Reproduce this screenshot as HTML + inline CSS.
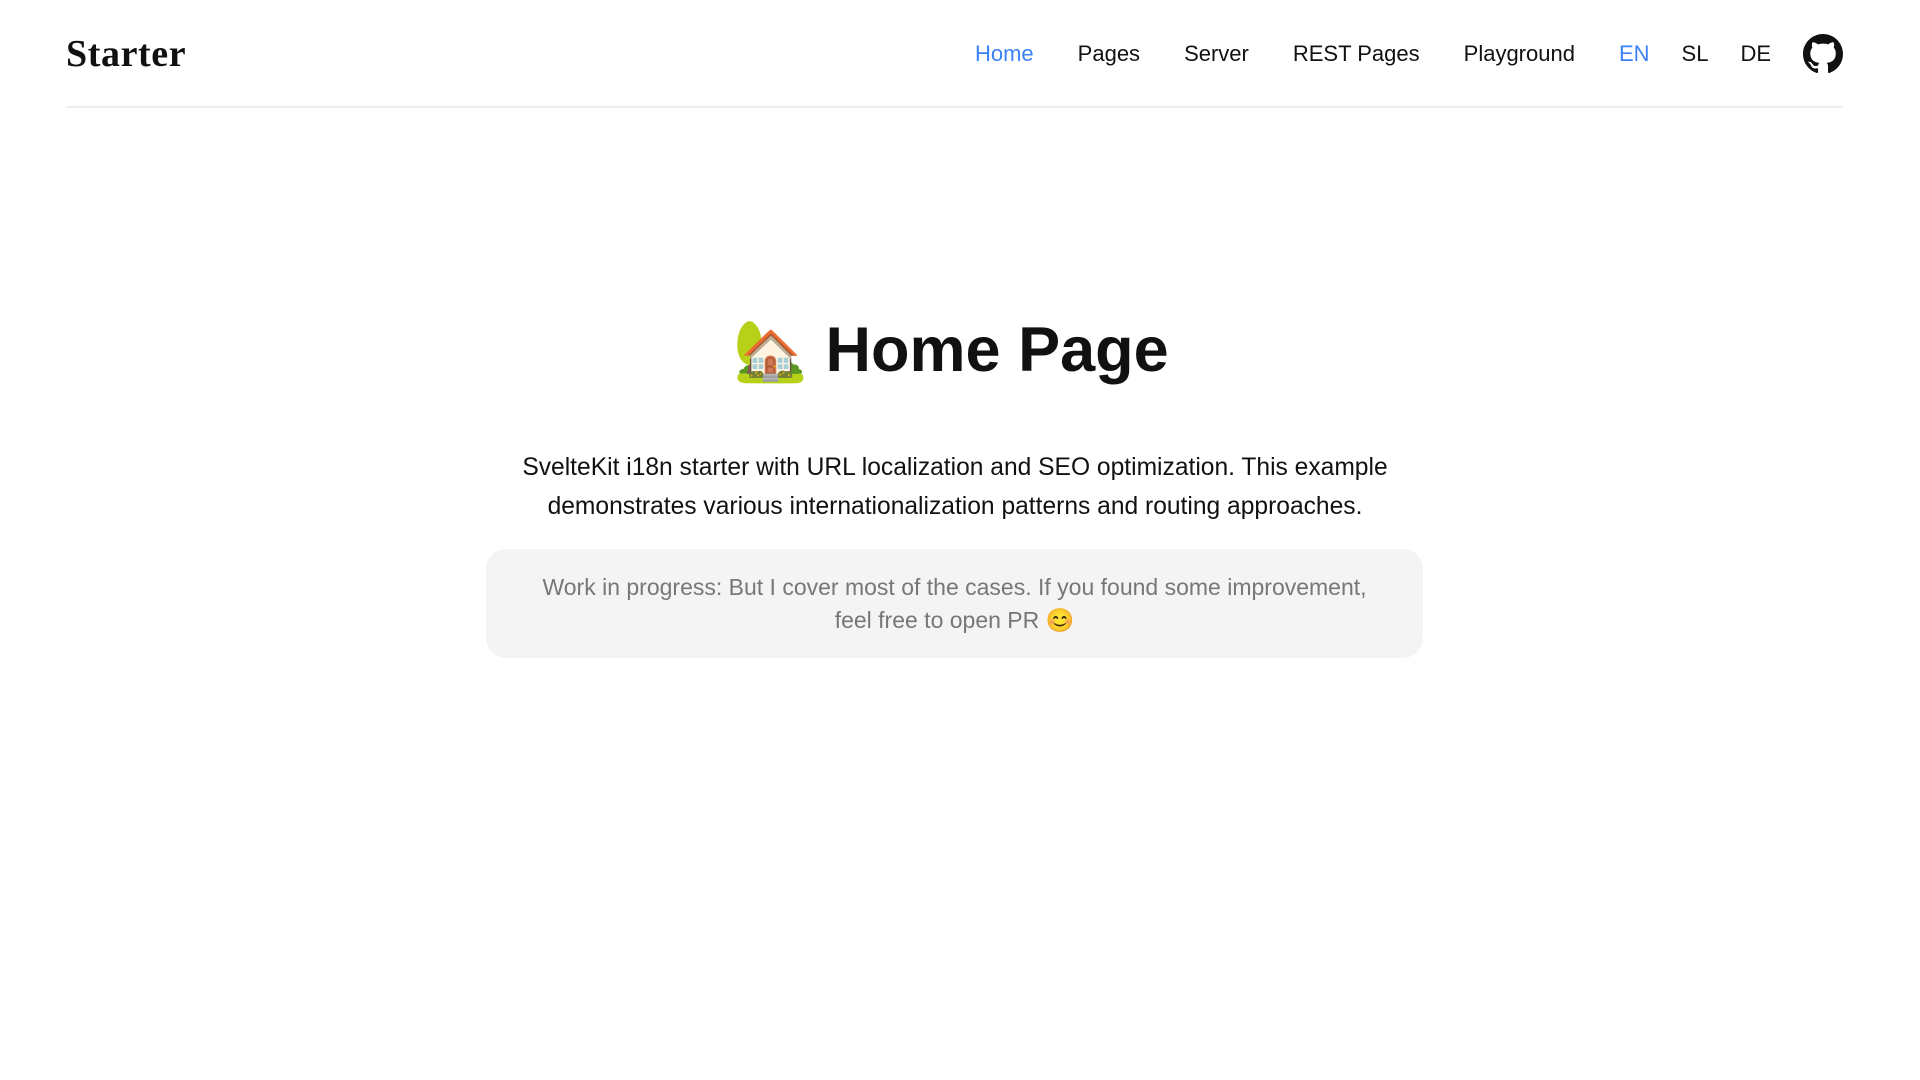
<!DOCTYPE html>
<html><head><meta charset="utf-8"><style>
body{margin:0;background:#fff;font-family:"Liberation Sans",sans-serif;color:#111;width:1920px;height:1080px;overflow:hidden}
header{position:absolute;left:66px;right:77px;top:0;height:106px;border-bottom:2px solid #eee}
.logo{position:absolute;left:0;top:32px;font-family:"Liberation Serif",serif;font-weight:bold;font-size:38px;letter-spacing:0.6px}
nav{position:absolute;right:0;top:34px;display:flex;align-items:center;font-size:22px}
nav a{margin-left:44px;color:#111;text-decoration:none}
nav a.act{color:#3b82f6}
nav .l{margin-left:32px}
nav svg{margin-left:32px}
h1{position:absolute;left:0;width:1920px;top:310px;margin:0;text-align:center;font-size:63px;font-weight:bold;line-height:80px;padding-right:18px;box-sizing:border-box}
p.d{position:absolute;left:0;width:1910px;top:448px;margin:0;text-align:center;font-size:24.6px;line-height:39px}
.box{position:absolute;left:486px;width:937px;top:549px;height:109px;background:#f4f4f4;border-radius:20px;text-align:center;color:#777;font-size:23px;line-height:33px;box-sizing:border-box;padding-top:22px}
</style></head><body>
<header><div class="logo">Starter</div>
<nav><a class="act">Home</a><a>Pages</a><a>Server</a><a>REST Pages</a><a>Playground</a><a class="act" style="margin-left:44px">EN</a><a class="l">SL</a><a class="l">DE</a>
<svg width="40" height="40" viewBox="0 0 16 16"><path fill="#111" d="M8 0C3.58 0 0 3.58 0 8c0 3.540 2.290 6.530 5.470 7.590.4.07.55-.17.55-.38 0-.19-.01-.82-.01-1.490-2.010.37-2.530-.49-2.690-.94-.09-.23-.48-.94-.82-1.130-.28-.15-.68-.52-.01-.53.63-.01 1.080.58 1.230.82.72 1.210 1.870.87 2.330.66.07-.52.28-.87.51-1.070-1.780-.2-3.640-.89-3.640-3.950 0-.87.31-1.590.82-2.150-.08-.2-.36-1.020.08-2.120 0 0 .67-.21 2.200.82.64-.18 1.320-.27 2-.27.68 0 1.360.09 2 .27 1.530-1.040 2.200-.82 2.200-.82.44 1.100.16 1.920.08 2.120.51.56.82 1.270.82 2.150 0 3.070-1.870 3.750-3.650 3.950.29.25.54.73.54 1.480 0 1.070-.01 1.930-.01 2.200 0 .21.15.46.55.38A8.013 8.013 0 0016 8c0-4.420-3.580-8-8-8z"/></svg></nav></header>
<h1><span style="font-size:60px">🏡</span> Home Page</h1>
<p class="d">SvelteKit i18n starter with URL localization and SEO optimization. This example<br>demonstrates various internationalization patterns and routing approaches.</p>
<div class="box">Work in progress: But I cover most of the cases. If you found some improvement,<br>feel free to open PR 😊</div>
</body></html>
